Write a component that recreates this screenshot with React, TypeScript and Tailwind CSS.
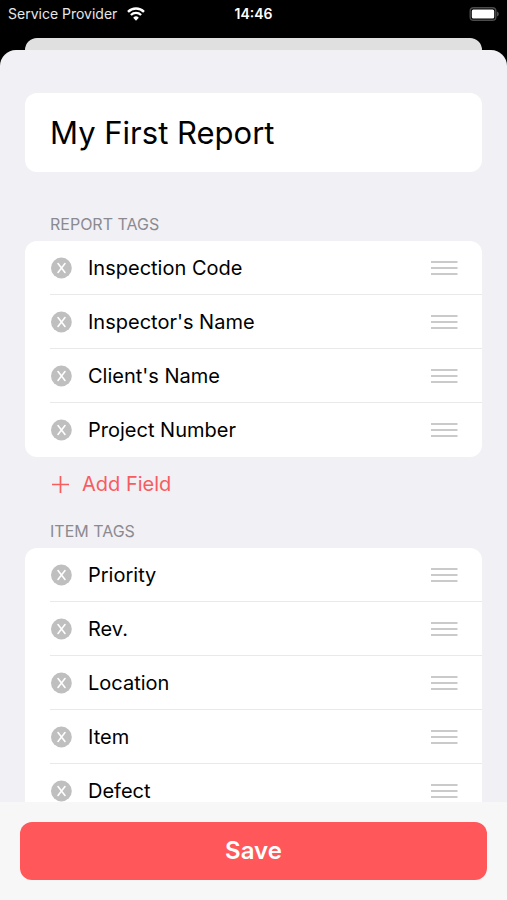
import { useState } from 'react';

interface TagSection {
  id: string;
  title: string;
  fields: string[];
}

const initialSections: TagSection[] = [
  {
    id: 'report',
    title: 'REPORT TAGS',
    fields: ['Inspection Code', "Inspector's Name", "Client's Name", 'Project Number'],
  },
  {
    id: 'item',
    title: 'ITEM TAGS',
    fields: ['Priority', 'Rev.', 'Location', 'Item', 'Defect'],
  },
];

function WifiIcon() {
  return (
    <svg width="18" height="14" viewBox="0 0 18 14" fill="none" aria-hidden="true">
      <path d="M1 4.8a11.4 11.4 0 0 1 16 0" stroke="white" strokeWidth="2.4" />
      <path d="M3.9 8a7.3 7.3 0 0 1 10.2 0" stroke="white" strokeWidth="2.3" />
      <path d="M9 13.7 6.2 10.7a4 4 0 0 1 5.6 0Z" fill="white" />
    </svg>
  );
}

function BatteryIcon() {
  return (
    <svg width="30" height="14" viewBox="0 0 30 14" fill="none" aria-hidden="true">
      <rect x="1.2" y="0.7" width="25.6" height="12.6" rx="3.4" stroke="#4c4c4c" strokeWidth="1.4" />
      <rect x="2.8" y="2.4" width="22.4" height="9.2" rx="1.6" fill="white" />
      <path d="M28 4.6c1.2.5 1.8 1.3 1.8 2.4s-.6 1.9-1.8 2.4Z" fill="#4c4c4c" />
    </svg>
  );
}

function StatusBar() {
  return (
    <header className="grid h-7 shrink-0 grid-cols-3 items-center px-2 text-sm text-gray-200">
      <div className="flex items-center gap-2.5 whitespace-nowrap">
        <span>Service Provider</span>
        <WifiIcon />
      </div>
      <span className="text-center font-semibold text-white">14:46</span>
      <div className="flex justify-end">
        <BatteryIcon />
      </div>
    </header>
  );
}

interface FieldRowProps {
  name: string;
  onRemove: () => void;
}

function FieldRow({ name, onRemove }: FieldRowProps) {
  return (
    <li className="group flex pl-[25px]">
      <div className="flex h-[54px] flex-1 items-center border-b border-[#e9e9ec] pr-6 group-last:border-transparent">
        <button type="button" onClick={onRemove} aria-label={`Remove ${name}`} className="mr-4">
          <svg width="22" height="22" viewBox="0 0 22 22" fill="none">
            <circle cx="11.4" cy="11" r="10.4" fill="#bfbfbf" />
            <path d="m8 6.6 7 8.8m0-8.8-7 8.8" stroke="white" strokeWidth="1.6" strokeLinecap="round" />
          </svg>
        </button>
        <span className="flex-1 text-xl">{name}</span>
        <button type="button" aria-label={`Reorder ${name}`}>
          <svg width="28" height="16" viewBox="0 0 28 16" fill="none">
            <path d="M1 2h26.5M1 8h26.5M1 14h26.5" stroke="#cacaca" strokeWidth="2" />
          </svg>
        </button>
      </div>
    </li>
  );
}

export default function App() {
  const [title, setTitle] = useState('My First Report');
  const [sections, setSections] = useState<TagSection[]>(initialSections);

  const updateFields = (id: string, update: (fields: string[]) => string[]) => {
    setSections((prev) =>
      prev.map((section) =>
        section.id === id ? { ...section, fields: update(section.fields) } : section
      )
    );
  };

  const removeField = (id: string, index: number) => {
    updateFields(id, (fields) => fields.filter((_, i) => i !== index));
  };

  const addField = (id: string) => {
    updateFields(id, (fields) => [...fields, 'New Field']);
  };

  return (
    <div className="flex h-screen flex-col bg-black font-['Inter','Liberation_Sans',sans-serif] text-black">
      <StatusBar />
      <div className="mx-[25px] mt-2.5 h-3 shrink-0 rounded-t-xl bg-[#e0e0e0]" />

      <form
        onSubmit={(e) => e.preventDefault()}
        className="flex min-h-0 flex-1 flex-col overflow-hidden rounded-t-2xl bg-[#f1f0f5]"
      >
        <main className="min-h-0 flex-1 overflow-y-auto px-[25px] pt-[43px] [scrollbar-width:none]">
          <input
            type="text"
            aria-label="Report name"
            value={title}
            onChange={(e) => setTitle(e.target.value)}
            className="mb-10 h-[79px] w-full rounded-xl bg-white px-[25px] text-[31px] focus:outline-none"
          />

          {sections.map((section) => (
            <section key={section.id}>
              <h2 className="h-[29px] pl-[25px] text-base leading-6 text-[#8b8a90]">
                {section.title}
              </h2>
              <ul className="overflow-hidden rounded-xl bg-white">
                {section.fields.map((field, index) => (
                  <FieldRow
                    key={`${field}-${index}`}
                    name={field}
                    onRemove={() => removeField(section.id, index)}
                  />
                ))}
              </ul>
              <button
                type="button"
                onClick={() => addField(section.id)}
                className="mb-2 flex h-[54px] items-center gap-3 pl-[25px] text-xl text-[#f75c5f]"
              >
                <svg width="20" height="20" viewBox="0 0 20 20" fill="none" aria-hidden="true">
                  <path d="M10.5 2v17M2 10.5h17" stroke="currentColor" strokeWidth="1.7" />
                </svg>
                Add Field
              </button>
            </section>
          ))}
        </main>

        <footer className="shrink-0 bg-[#f7f7f8] p-5">
          <button
            type="submit"
            className="h-[58px] w-full rounded-xl bg-[#ff575a] text-2xl font-semibold text-white"
          >
            Save
          </button>
        </footer>
      </form>
    </div>
  );
}
